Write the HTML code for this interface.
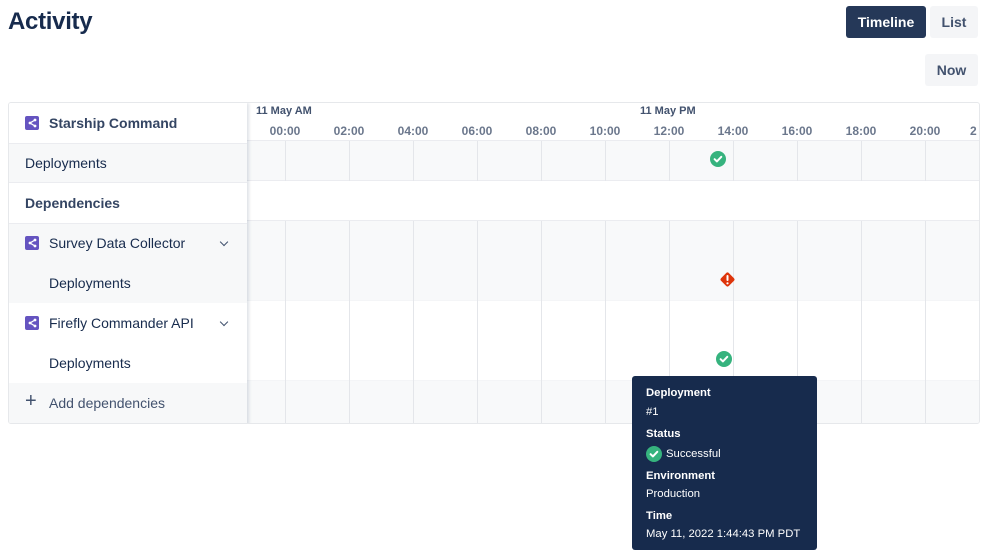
<!DOCTYPE html>
<html><head><meta charset="utf-8"><style>
*{box-sizing:border-box;margin:0;padding:0}
body{width:991px;height:559px;background:#fff;font-family:"Liberation Sans",sans-serif;color:#172b4d;position:relative;overflow:hidden}
.abs{position:absolute}
h1{position:absolute;left:8px;top:8px;font-size:24px;font-weight:600;color:#172b4d;letter-spacing:-0.3px}
.btn{position:absolute;height:32px;border-radius:3px;font-size:14px;font-weight:600;line-height:32px;text-align:center}
.card{position:absolute;left:8px;top:102px;width:972px;height:322px;border:1px solid #e6e8eb;border-radius:3px;overflow:hidden}
.vl{position:absolute;width:1px;background:#e4e6ea}
.hl{position:absolute;height:1px;background:#ebecf0}
.row{position:absolute;left:0;width:238px;height:40px;font-size:14px;line-height:40px}
.ic{position:absolute;width:14px;height:14px;border-radius:2px;background:#6554c0;top:13px}
.tl{position:absolute;top:21px;font-size:12px;font-weight:700;color:#6b778c;width:60px;text-align:center}
.chev{position:absolute;left:212px;top:16px;width:6px;height:6px;border-right:1.6px solid #42526e;border-bottom:1.6px solid #42526e;transform:rotate(45deg)}
.tip{position:absolute;left:632px;top:376px;width:185px;height:174px;background:#172b4d;border-radius:3px;color:#fff;font-size:11.3px;padding:11px 14px}
.tip b{display:block;font-weight:700;margin-top:0}
</style></head><body>
<h1>Activity</h1>
<div class="btn" style="left:846px;top:6px;width:80px;background:#253858;color:#fff">Timeline</div>
<div class="btn" style="left:930px;top:6px;width:48px;background:#f4f5f7;color:#42526e">List</div>
<div class="btn" style="left:925px;top:54px;width:53px;background:#f4f5f7;color:#42526e">Now</div>

<div class="card">
 <div class="abs" style="left:0;top:38px;width:972px;height:40px;background:#f8f9fa"></div>
 <div class="abs" style="left:0;top:118px;width:972px;height:80px;background:#f8f9fa"></div>
 <div class="abs" style="left:0;top:278px;width:972px;height:42px;background:#f8f9fa"></div>
 <div class="hl" style="left:0;top:37px;width:972px"></div>
 <div class="hl" style="left:0;top:77px;width:972px"></div>
 <div class="hl" style="left:0;top:117px;width:972px"></div>
 <div class="hl" style="left:0;top:197px;width:972px;background:#f4f5f7"></div>
 <div class="hl" style="left:0;top:277px;width:972px;background:#f4f5f7"></div>
 <div class="vl" style="left:276px;top:38px;height:40px"></div><div class="vl" style="left:276px;top:118px;height:202px"></div>
 <div class="vl" style="left:340px;top:38px;height:40px"></div><div class="vl" style="left:340px;top:118px;height:202px"></div>
 <div class="vl" style="left:404px;top:38px;height:40px"></div><div class="vl" style="left:404px;top:118px;height:202px"></div>
 <div class="vl" style="left:468px;top:38px;height:40px"></div><div class="vl" style="left:468px;top:118px;height:202px"></div>
 <div class="vl" style="left:532px;top:38px;height:40px"></div><div class="vl" style="left:532px;top:118px;height:202px"></div>
 <div class="vl" style="left:596px;top:38px;height:40px"></div><div class="vl" style="left:596px;top:118px;height:202px"></div>
 <div class="vl" style="left:660px;top:38px;height:40px"></div><div class="vl" style="left:660px;top:118px;height:202px"></div>
 <div class="vl" style="left:724px;top:38px;height:40px"></div><div class="vl" style="left:724px;top:118px;height:202px"></div>
 <div class="vl" style="left:788px;top:38px;height:40px"></div><div class="vl" style="left:788px;top:118px;height:202px"></div>
 <div class="vl" style="left:852px;top:38px;height:40px"></div><div class="vl" style="left:852px;top:118px;height:202px"></div>
 <div class="vl" style="left:916px;top:38px;height:40px"></div><div class="vl" style="left:916px;top:118px;height:202px"></div>
 <div class="abs" style="left:247px;top:2px;font-size:11px;font-weight:700;color:#42526e">11 May AM</div>
 <div class="abs" style="left:631px;top:2px;font-size:11px;font-weight:700;color:#42526e">11 May PM</div>
 <div class="tl" style="left:246px">00:00</div>
 <div class="tl" style="left:310px">02:00</div>
 <div class="tl" style="left:374px">04:00</div>
 <div class="tl" style="left:438px">06:00</div>
 <div class="tl" style="left:502px">08:00</div>
 <div class="tl" style="left:566px">10:00</div>
 <div class="tl" style="left:630px">12:00</div>
 <div class="tl" style="left:694px">14:00</div>
 <div class="tl" style="left:758px">16:00</div>
 <div class="tl" style="left:822px">18:00</div>
 <div class="tl" style="left:886px">20:00</div>
 <div class="tl" style="left:950px;text-align:left;width:20px;margin-left:11px">2</div>
 <svg class="abs" style="left:701px;top:48px" width="16" height="16" viewBox="0 0 16 16"><circle cx="8" cy="8" r="8" fill="#36b37e"/><path d="M4.6 8.2l2.3 2.2 4.4-4.6" stroke="#fff" stroke-width="2" fill="none" stroke-linecap="round" stroke-linejoin="round"/></svg>
 <svg class="abs" style="left:710px;top:168px" width="17" height="17" viewBox="0 0 17 17"><rect x="3" y="3" width="11" height="11" rx="2" transform="rotate(45 8.5 8.5)" fill="#de350b"/><rect x="7.5" y="4" width="2" height="6" rx="1" fill="#fff"/><circle cx="8.5" cy="12.3" r="1.1" fill="#fff"/></svg>
 <svg class="abs" style="left:707px;top:248px" width="16" height="16" viewBox="0 0 16 16"><circle cx="8" cy="8" r="8" fill="#36b37e"/><path d="M4.6 8.2l2.3 2.2 4.4-4.6" stroke="#fff" stroke-width="2" fill="none" stroke-linecap="round" stroke-linejoin="round"/></svg>

 <div class="abs" style="left:0;top:0;width:238px;height:322px;background:#fff;box-shadow:2px 0 3px rgba(9,30,66,0.13)">
  <div class="row" style="top:0;font-weight:600;color:#344563"><svg class="abs" style="left:16px;top:13px" width="14" height="14" viewBox="0 0 14 14"><rect width="14" height="14" rx="2" fill="#6554c0"/><path d="M10 4L5 7l5 3" stroke="#fff" stroke-width="1.3" fill="none"/><circle cx="10" cy="4" r="1.4" fill="#fff"/><circle cx="5" cy="7" r="1.4" fill="#fff"/><circle cx="10" cy="10" r="1.4" fill="#fff"/></svg><span style="position:absolute;left:40px">Starship Command</span></div>
  <div class="row" style="top:40px;background:#f7f8f9;border-top:1px solid #ebecf0;border-bottom:1px solid #ebecf0;line-height:38px"><span style="position:absolute;left:16px">Deployments</span></div>
  <div class="row" style="top:80px;font-weight:600;color:#344563"><span style="position:absolute;left:16px">Dependencies</span></div>
  <div class="row" style="top:120px;background:#f7f8f9;border-top:1px solid #ebecf0"><svg class="abs" style="left:16px;top:12px" width="14" height="14" viewBox="0 0 14 14"><rect width="14" height="14" rx="2" fill="#6554c0"/><path d="M10 4L5 7l5 3" stroke="#fff" stroke-width="1.3" fill="none"/><circle cx="10" cy="4" r="1.4" fill="#fff"/><circle cx="5" cy="7" r="1.4" fill="#fff"/><circle cx="10" cy="10" r="1.4" fill="#fff"/></svg><span style="position:absolute;left:40px;top:-1px">Survey Data Collector</span><div class="chev" style="top:15px"></div></div>
  <div class="row" style="top:160px;background:#f7f8f9"><span style="position:absolute;left:40px">Deployments</span></div>
  <div class="row" style="top:200px"><svg class="abs" style="left:16px;top:13px" width="14" height="14" viewBox="0 0 14 14"><rect width="14" height="14" rx="2" fill="#6554c0"/><path d="M10 4L5 7l5 3" stroke="#fff" stroke-width="1.3" fill="none"/><circle cx="10" cy="4" r="1.4" fill="#fff"/><circle cx="5" cy="7" r="1.4" fill="#fff"/><circle cx="10" cy="10" r="1.4" fill="#fff"/></svg><span style="position:absolute;left:40px">Firefly Commander API</span><div class="chev" style="top:16px"></div></div>
  <div class="row" style="top:240px"><span style="position:absolute;left:40px">Deployments</span></div>
  <div class="row" style="top:280px;height:42px;background:#f7f8f9;color:#42526e"><span style="position:absolute;left:16px;font-size:20px;font-weight:300;top:-2px">+</span><span style="position:absolute;left:40px">Add dependencies</span></div>
 </div>
</div>

<div class="tip">
 <b style="line-height:13px">Deployment</b>
 <div style="margin-top:6px;line-height:13px">#1</div>
 <b style="margin-top:9px;line-height:13px">Status</b>
 <div style="margin-top:5px;line-height:16px;position:relative;padding-left:20px"><svg style="position:absolute;left:0;top:0" width="16" height="16" viewBox="0 0 16 16"><circle cx="8" cy="8" r="8" fill="#36b37e"/><path d="M4.6 8.2l2.3 2.2 4.4-4.6" stroke="#fff" stroke-width="2" fill="none" stroke-linecap="round" stroke-linejoin="round"/></svg>Successful</div>
 <b style="margin-top:8px;line-height:13px">Environment</b>
 <div style="margin-top:5px;line-height:13px">Production</div>
 <b style="margin-top:9px;line-height:13px">Time</b>
 <div style="margin-top:5px;line-height:13px">May 11, 2022 1:44:43 PM PDT</div>
</div>
</body></html>
